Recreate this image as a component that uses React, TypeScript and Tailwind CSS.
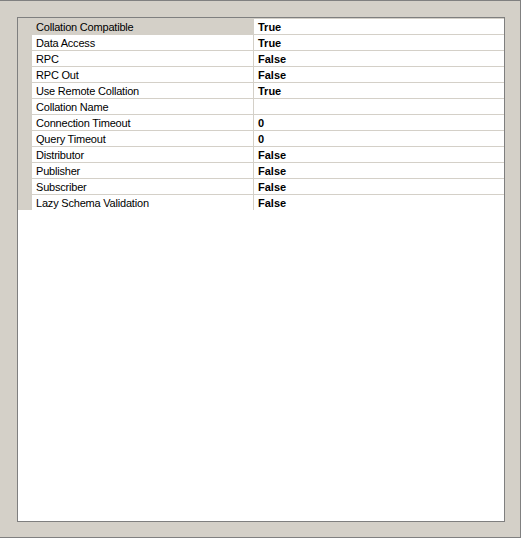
import React from "react";

const rows: [string, string][] = [
  ["Collation Compatible", "True"],
  ["Data Access", "True"],
  ["RPC", "False"],
  ["RPC Out", "False"],
  ["Use Remote Collation", "True"],
  ["Collation Name", ""],
  ["Connection Timeout", "0"],
  ["Query Timeout", "0"],
  ["Distributor", "False"],
  ["Publisher", "False"],
  ["Subscriber", "False"],
  ["Lazy Schema Validation", "False"],
];

export default function App() {
  return (
    <div
      className="w-[521px] h-[538px] bg-[#d4d0c8] border-t border-r border-b border-[#808080] pt-[16px] pl-[17px] pr-[15px] pb-[15px] flex"
      style={{ fontFamily: '"Liberation Sans", Arial, sans-serif' }}
    >
      <div className="flex-1 border border-[#7f7f7f] bg-white flex flex-col">
        <div className="flex">
          <div className="w-[14px] bg-[#d4d0c8]" />
          <div className="flex-1 flex flex-col">
            {rows.map(([name, value], i) => (
              <div
                key={name}
                className={`h-[16px] flex border-t ${i === 0 ? "border-transparent bg-[#d4d0c8]" : "border-[#d4d0c8]"}`}
              >
                <div className="w-[221px] pl-[4px] pt-px text-[11px] leading-[15px] tracking-[-0.2px] text-black whitespace-nowrap overflow-hidden">
                  {name}
                </div>
                <div className="flex-1 bg-white border-l border-[#d4d0c8] pl-[4px] pt-px text-[11px] leading-[15px] font-bold text-black whitespace-nowrap">
                  {value}
                </div>
              </div>
            ))}
          </div>
        </div>
      </div>
    </div>
  );
}
